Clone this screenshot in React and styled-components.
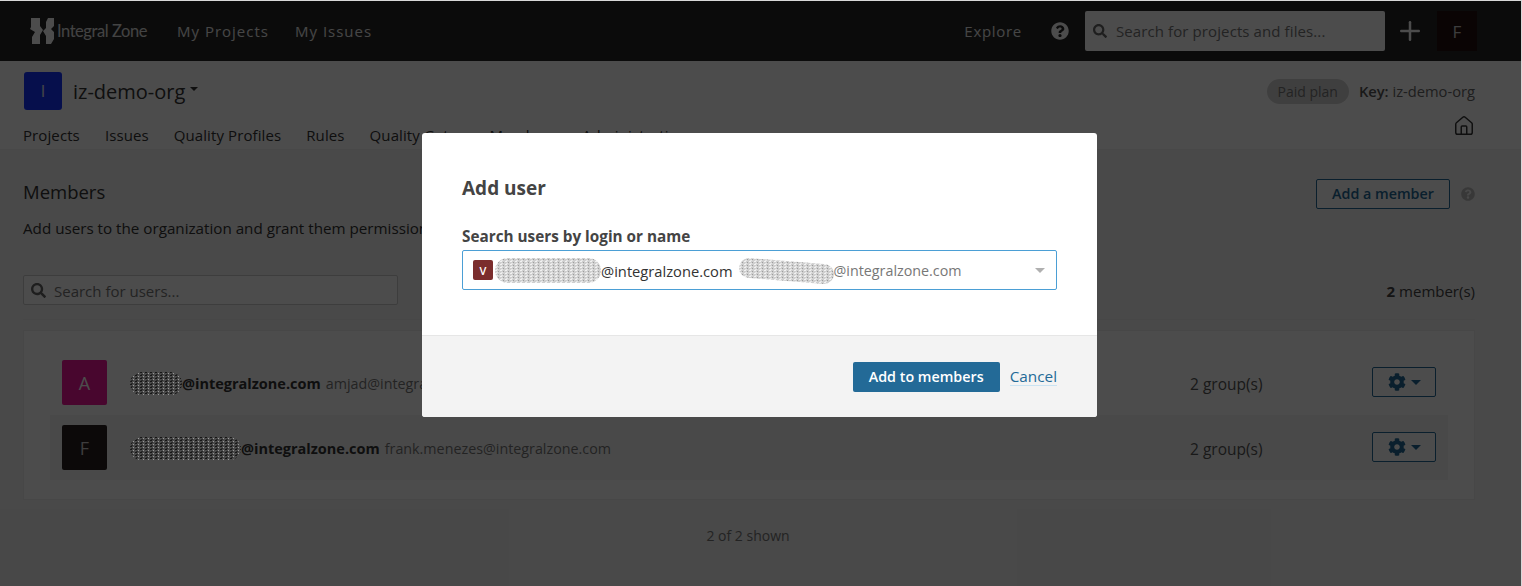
import React, { useId } from 'react';
import styled, { createGlobalStyle } from 'styled-components';
import { FaCog, FaQuestionCircle, FaSearch } from 'react-icons/fa';
import { Home, Plus } from 'lucide-react';

const GlobalStyle = createGlobalStyle`
  html, body {
    margin: 0;
    padding: 0;
    background: #fff;
    overflow: hidden;
  }
  * { box-sizing: border-box; }
`;

const Shell = styled.div`
  position: relative;
  width: 1522px;
  height: 586px;
  padding: 1px 1px 0 0;
  overflow: hidden;
  background: #d8d8d8;
  font-family: "Open Sans", "Noto Sans", sans-serif;
  font-size: 14px;
  color: #333;
`;

const Page = styled.div`
  height: 585px;
  background: #f3f3f3;
`;

const TopBar = styled.header`
  display: flex;
  align-items: center;
  height: 60px;
  padding: 0 44px 0 30px;
  background: #262626;
`;

const Brand = styled.div`
  display: flex;
  align-items: center;
  width: 147px;
  color: #e0e0e0;
  font-family: "Lato", sans-serif;
  font-size: 16.5px;
  letter-spacing: -0.45px;

  svg {
    margin-right: 3px;
  }
`;

const TopLink = styled.span`
  margin-left: ${(p) => p.$gap || 0}px;
  color: #fff;
  font-size: 15px;
  letter-spacing: 1px;
  opacity: 0.9;
`;

const ExploreLink = styled(TopLink)`
  letter-spacing: 0.7px;
`;

const TopRight = styled.div`
  display: flex;
  align-items: center;
  margin-left: auto;
`;

const HelpIcon = styled(FaQuestionCircle)`
  margin: 0 16px 0 29px;
  color: #fff;
  font-size: 18px;
`;

const TopSearch = styled.div`
  display: flex;
  align-items: center;
  width: 300px;
  height: 40px;
  padding: 0 8px;
  border-radius: 2px;
  background: #fff;
  color: #777;
  font-size: 15px;
  letter-spacing: 0.1px;

  svg {
    margin-right: 9px;
    font-size: 14px;
    color: #666;
  }
`;

const PlusIcon = styled(Plus)`
  margin: 0 12px 0 10px;
  color: #fff;
`;

const TopAvatar = styled.div`
  display: flex;
  align-items: center;
  justify-content: center;
  width: 40px;
  height: 40px;
  background: #241010;
  color: #ccc;
  font-size: 17px;
`;

const OrgHeader = styled.section`
  height: 89px;
  padding: 11px 46px 0 23px;
  background: #fff;
  border-bottom: 1px solid #f0f0f0;
`;

const OrgTop = styled.div`
  display: flex;
  align-items: center;
  height: 38px;
`;

const OrgAvatar = styled.div`
  display: flex;
  align-items: center;
  justify-content: center;
  width: 38px;
  height: 38px;
  margin-left: 1px;
  margin-right: 11px;
  border-radius: 3px;
  background: #1435ff;
  color: #eee;
  font-size: 16px;
`;

const OrgName = styled.span`
  font-size: 20px;
  color: #333;
`;

const Caret = styled.i`
  display: inline-block;
  flex: none;
  width: 0;
  height: 0;
  margin-left: ${(p) => (p.$auto ? 'auto' : `${p.$gap || 5}px`)};
  border-left: ${(p) => p.$size || 4}px solid transparent;
  border-right: ${(p) => p.$size || 4}px solid transparent;
  border-top: ${(p) => p.$size || 4}px solid ${(p) => p.$color || '#333'};
`;

const OrgCaret = styled(Caret)`
  position: relative;
  top: -2px;
`;

const PlanBadge = styled.span`
  margin-left: auto;
  padding: 0 11px;
  height: 25px;
  line-height: 25px;
  border-radius: 13px;
  background: #d4d4d4;
  color: #777;
`;

const KeyText = styled.span`
  margin-left: 10px;
  font-size: 14.7px;
  color: #666;

  b {
    font-weight: 600;
    color: #555;
  }
`;

const OrgNav = styled.nav`
  display: flex;
  align-items: center;
  gap: 25px;
  height: 34px;
  margin-top: 8px;
  font-size: 15px;
  letter-spacing: 0.1px;
`;

const HomeIcon = styled(Home)`
  margin: -18px 0 0 auto;
  color: #333;
`;

const Content = styled.main`
  padding: 0 46px 0 23px;
`;

const TitleRow = styled.div`
  display: flex;
  align-items: center;
  height: 30px;
  margin-top: 29px;
`;

const SectionTitle = styled.h2`
  margin: 0 auto 6px 0;
  font-size: 18.5px;
  font-weight: 400;
  color: #333;
`;

const OutlineButton = styled.div`
  display: flex;
  align-items: center;
  justify-content: center;
  width: ${(p) => p.$width}px;
  height: 30px;
  padding-bottom: 2px;
  border: 1px solid #236a97;
  border-radius: 2px;
  background: #fff;
  color: #236a97;
  font-weight: 600;
  font-size: 14.3px;
`;

const SmallHelp = styled(FaQuestionCircle)`
  margin-left: 11px;
  color: #bbb;
  font-size: 14px;
`;

const Description = styled.p`
  margin: 9px 0 0;
  line-height: 20px;
  font-size: 15.2px;
  white-space: nowrap;
`;

const FilterRow = styled.div`
  display: flex;
  align-items: flex-start;
  justify-content: space-between;
  height: 45px;
  margin-top: 37px;
  padding-bottom: 14px;
  border-bottom: 1px solid #eee;
`;

const UserSearch = styled.div`
  display: flex;
  align-items: center;
  width: 375px;
  height: 30px;
  padding: 1px 7px 0;
  border: 1px solid #ccc;
  border-radius: 2px;
  background: #fff;
  color: #777;
  font-size: 15px;

  svg {
    margin-right: 8px;
    font-size: 15px;
    color: #666;
  }
`;

const MemberCount = styled.span`
  line-height: 32px;
  font-size: 15px;
  color: #444;
  b { font-weight: 700; }
`;

const Panel = styled.div`
  margin-top: 10px;
  height: 170px;
  padding: 19px 26px;
  border: 1px solid #eee;
  background: #fff;
`;

const Row = styled.div`
  display: flex;
  align-items: center;
  height: 65px;
  padding: 0 12px;
  background: ${(p) => (p.$shaded ? '#f6f6f6' : 'transparent')};
`;

const MemberAvatar = styled.div`
  flex: none;
  display: flex;
  align-items: center;
  justify-content: center;
  width: 45px;
  height: 45px;
  border-radius: 2px;
  background: ${(p) => p.$color};
  color: ${(p) => p.$ink || '#fff'};
  font-size: 18px;
`;

const MemberName = styled.div`
  display: flex;
  align-items: center;
  margin: 2px 0 0 23px;
  font-weight: 700;
  font-size: 14.5px;
  color: #333;
`;

const MemberLogin = styled.span`
  margin-left: 5px;
  font-size: 14.3px;
  font-weight: 400;
  color: #777;
`;

const Groups = styled.span`
  margin: 2px 0 0 auto;
  width: 182px;
  font-size: 15.5px;
  color: #555;
`;

const GearButton = styled(OutlineButton)`
  margin-top: -1px;
  padding-bottom: 0;
  svg { font-size: 18px; }
`;

const Shown = styled.div`
  margin-top: 26px;
  text-align: center;
  color: #777;
  padding-right: 2px;
`;

const Overlay = styled.div`
  position: absolute;
  inset: 1px 1px 0 0;
  background: rgba(0, 0, 0, 0.7);
`;

const Modal = styled.div`
  position: absolute;
  left: 422px;
  top: 133px;
  width: 675px;
  height: 284px;
  display: flex;
  flex-direction: column;
  border-radius: 3px;
  overflow: hidden;
  background: #fff;
`;

const ModalBody = styled.div`
  flex: 1;
  padding: 42px 40px 0;
`;

const ModalTitle = styled.h3`
  margin: 0;
  font-size: 19px;
  line-height: 26px;
  font-weight: 700;
  color: #444;
`;

const FieldLabel = styled.label`
  display: block;
  margin-top: 25px;
  line-height: 20px;
  font-weight: 700;
  font-size: 15.3px;
  color: #444;
`;

const SelectBox = styled.div`
  display: flex;
  align-items: center;
  height: 40px;
  margin-top: 4px;
  padding: 1px 11px 0 10px;
  border: 1px solid #4b9fd5;
  border-radius: 2px;
  color: #333;
`;

const OptionAvatar = styled.span`
  flex: none;
  display: flex;
  align-items: center;
  justify-content: center;
  width: 20px;
  height: 20px;
  margin: -1px 2px 0 0;
  border-radius: 2px;
  background: #7b2d2d;
  color: #fff;
  font-size: 11px;
  font-weight: 600;
`;

const OptionName = styled.span`
  font-size: 14.7px;
  color: #333;
`;

const OptionLogin = styled.span`
  color: #777;
  font-size: 14.3px;
`;

const ModalFooter = styled.div`
  display: flex;
  align-items: center;
  justify-content: flex-end;
  height: 82px;
  padding: 0 40px 0 0;
  background: #f3f3f3;
  border-top: 1px solid #e6e6e6;
`;

const PrimaryButton = styled.div`
  display: flex;
  align-items: center;
  justify-content: center;
  width: 147px;
  height: 30px;
  border-radius: 2px;
  background: #236a97;
  color: #fff;
  font-size: 14.3px;
  font-weight: 600;
`;

const CancelLink = styled.span`
  margin: 1px 0 0 10px;
  color: #236a97;
  font-size: 15.3px;
  border-bottom: 1px solid #cae3f2;
  line-height: 17px;
`;

// the scribbles sit on top of the dimmed page, they are not dimmed themselves
const BlobWrap = styled.svg`
  flex: none;
  display: block;
  position: relative;
  z-index: 2;
  margin: ${(p) => p.$margin || '0'};
`;

// redaction scribble over the names
function Blob({ width, height, tone, margin, tilt = 0 }) {
  const id = useId();
  const dark = tone === 'dark';
  const r = (height - tilt) / 2;
  const outline = `M${r} 0 L${width - r} ${tilt} A${r} ${r} 0 0 1 ${width - r} ${height} L${r} ${height - tilt} A${r} ${r} 0 0 1 ${r} 0 Z`;
  return (
    <BlobWrap $margin={margin} width={width} height={height} viewBox={`0 0 ${width} ${height}`}>
      <defs>
        <pattern id={id} width="5" height="3" patternUnits="userSpaceOnUse">
          <rect width="5" height="3" fill={dark ? '#4a4a4a' : '#cfcfcf'} />
          <rect x="0" y="0" width="2" height="1" fill={dark ? '#161616' : '#f2f2f2'} />
          <rect x="3" y="1" width="1" height="1" fill={dark ? '#9a9a9a' : '#9d9d9d'} />
          <rect x="1" y="2" width="2" height="1" fill={dark ? '#2a2a2a' : '#e6e6e6'} />
        </pattern>
      </defs>
      <path d={outline} fill={`url(#${id})`} />
    </BlobWrap>
  );
}

function Logo() {
  return (
    <svg width="24" height="26" viewBox="0 0 24 26">
      <path fill="#fff" d="M1 0h9v8l3 4-3 5v9H2v-7l3-5-5-3 1-2 z" />
      <path fill="#fff" d="M24 0v8l-3 3 3 3v7l-3 5h-5v-8l-3-5 3-3V4l2-4z" />
    </svg>
  );
}

export default function App() {
  return (
    <>
      <GlobalStyle />
      <Shell>
        <Page>
          <TopBar>
            <Brand>
              <Logo />
              Integral Zone
            </Brand>
            <TopLink>My Projects</TopLink>
            <TopLink $gap={26}>My Issues</TopLink>
            <TopRight>
              <ExploreLink>Explore</ExploreLink>
              <HelpIcon />
              <TopSearch>
                <FaSearch />
                Search for projects and files...
              </TopSearch>
              <PlusIcon size={30} strokeWidth={2} />
              <TopAvatar>F</TopAvatar>
            </TopRight>
          </TopBar>

          <OrgHeader>
            <OrgTop>
              <OrgAvatar>I</OrgAvatar>
              <OrgName>iz-demo-org</OrgName>
              <OrgCaret $size={4.5} />
              <PlanBadge>Paid plan</PlanBadge>
              <KeyText>
                <b>Key:</b> iz-demo-org
              </KeyText>
            </OrgTop>
            <OrgNav>
              <span>Projects</span>
              <span>Issues</span>
              <span>Quality Profiles</span>
              <span>Rules</span>
              <span>Quality Gates</span>
              <span>Members</span>
              <span>
                Administration
                <Caret $size={5} />
              </span>
              <HomeIcon size={22} strokeWidth={1.6} />
            </OrgNav>
          </OrgHeader>

          <Content>
            <TitleRow>
              <SectionTitle>Members</SectionTitle>
              <OutlineButton $width={134}>Add a member</OutlineButton>
              <SmallHelp />
            </TitleRow>
            <Description>
              Add users to the organization and grant them permissions to work on its projects.
            </Description>

            <FilterRow>
              <UserSearch>
                <FaSearch />
                Search for users...
              </UserSearch>
              <MemberCount>
                <b>2</b> member(s)
              </MemberCount>
            </FilterRow>

            <Panel>
              <Row>
                <MemberAvatar $color="#f0149a">A</MemberAvatar>
                <MemberName>
                  <Blob width={52} height={23} tone="dark" />
                  @integralzone.com
                  <MemberLogin>amjad@integralzone.com</MemberLogin>
                </MemberName>
                <Groups>2 group(s)</Groups>
                <GearButton $width={64}>
                  <FaCog />
                  <Caret $size={5} $gap={5} $color="#236a97" />
                </GearButton>
              </Row>
              <Row $shaded>
                <MemberAvatar $color="#2a1f20" $ink="#ccc">F</MemberAvatar>
                <MemberName>
                  <Blob width={111} height={23} tone="dark" />
                  @integralzone.com
                  <MemberLogin>frank.menezes@integralzone.com</MemberLogin>
                </MemberName>
                <Groups>2 group(s)</Groups>
                <GearButton $width={64}>
                  <FaCog />
                  <Caret $size={5} $gap={5} $color="#236a97" />
                </GearButton>
              </Row>
            </Panel>

            <Shown>2 of 2 shown</Shown>
          </Content>
        </Page>

        <Overlay />

        <Modal>
          <ModalBody>
            <ModalTitle>Add user</ModalTitle>
            <FieldLabel>Search users by login or name</FieldLabel>
            <SelectBox>
              <OptionAvatar>V</OptionAvatar>
              <Blob width={106} height={25} tone="light" />
              <OptionName>@integralzone.com</OptionName>
              <Blob width={95} height={26} tilt={6} tone="light" margin="0 0 0 6px" />
              <OptionLogin>@integralzone.com</OptionLogin>
              <Caret $auto $size={5} $color="#b0b0b0" />
            </SelectBox>
          </ModalBody>
          <ModalFooter>
            <PrimaryButton>Add to members</PrimaryButton>
            <CancelLink>Cancel</CancelLink>
          </ModalFooter>
        </Modal>
      </Shell>
    </>
  );
}
